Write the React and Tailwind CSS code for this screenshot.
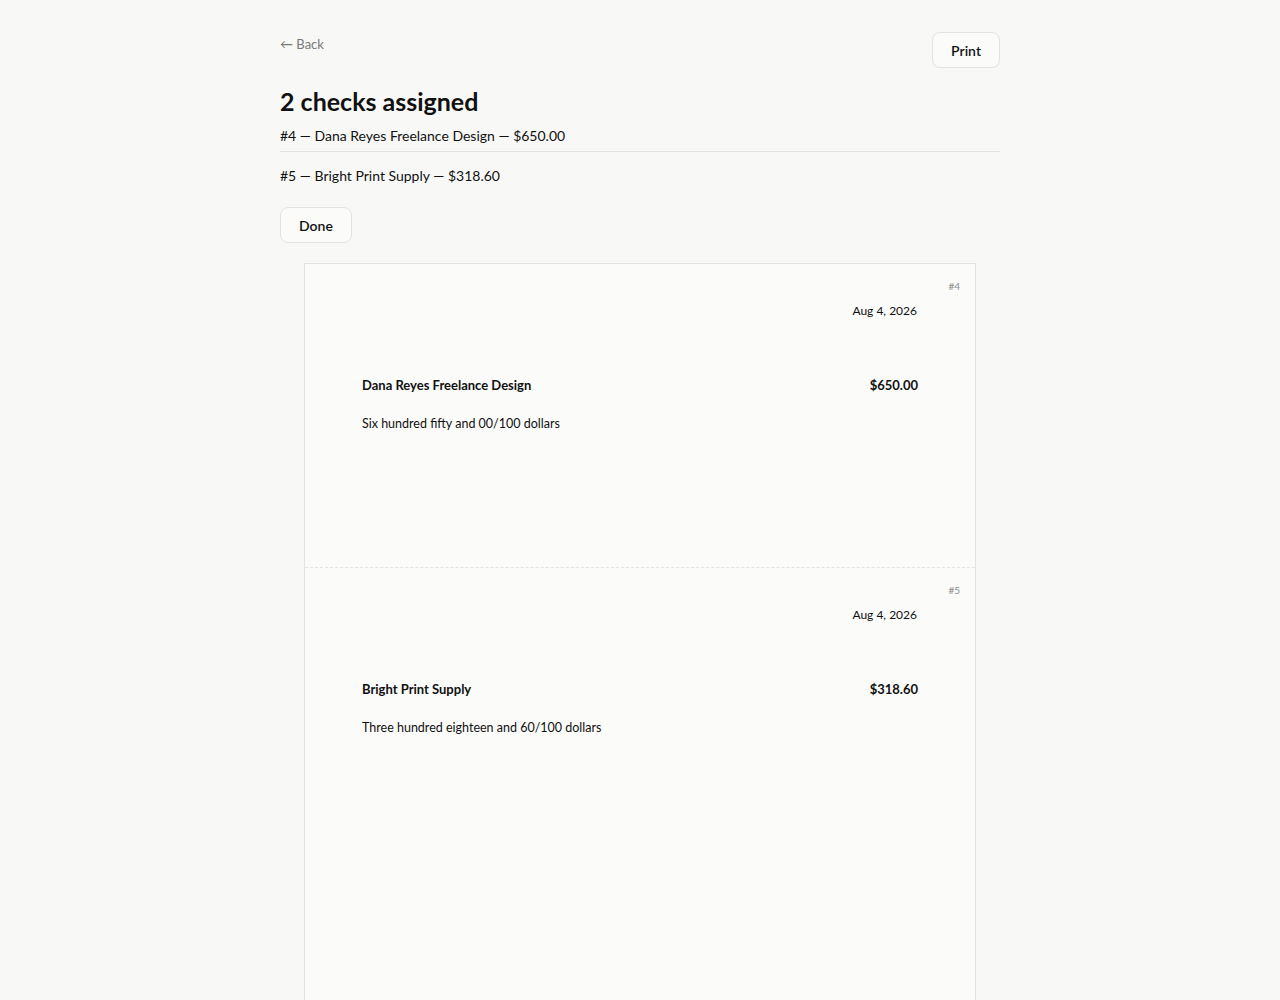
const checks = [
  { num: 4, payee: 'Dana Reyes Freelance Design', amount: '$650.00', words: 'Six hundred fifty and 00/100 dollars', date: 'Aug 4, 2026' },
  { num: 5, payee: 'Bright Print Supply', amount: '$318.60', words: 'Three hundred eighteen and 60/100 dollars', date: 'Aug 4, 2026' },
]

function Check({ c, last }) {
  return (
    <div className={`relative h-[304px] px-[57px] ${last ? '' : 'border-b border-dashed border-[#e2e2df]'}`}>
      <div className="absolute right-[15px] top-[15px] text-[10px] text-[#8a8a86]">#{c.num}</div>
      <div className="pt-[38px] pr-px text-right text-[12px] text-[#111]">{c.date}</div>
      <div className="mt-[56px] flex items-center justify-between text-[13px] font-bold text-[#111]">
        <span>{c.payee}</span>
        <span>{c.amount}</span>
      </div>
      <div className="mt-[19px] text-[12.5px] text-[#111]">{c.words}</div>
    </div>
  )
}

export default function App() {
  return (
    <div className="h-screen overflow-hidden bg-[#f8f8f7] font-['Segoe_UI','Lato','Noto_Sans',sans-serif] text-[#111]">
      <div className="mx-auto w-[720px] pt-[32px]">
        <div className="flex items-start justify-between">
          <button className="mt-[3px] text-[13px] text-[#7a7a76]">← Back</button>
          <button className="h-[36px] rounded-lg border border-[#e3e3e0] bg-[#fbfbfa] px-[18px] text-[14px] font-semibold">Print</button>
        </div>
        <h1 className="mt-[17px] text-[25px] font-bold leading-[32px]">2 checks assigned</h1>
        <div className="mt-[7px] border-b border-[#e3e3e0] pb-[3px] text-[14px] leading-[24px]">#4 — Dana Reyes Freelance Design — $650.00</div>
        <div className="pt-[12px] text-[14px] leading-[24px]">#5 — Bright Print Supply — $318.60</div>
        <button className="mt-[19px] h-[36px] rounded-lg border border-[#e3e3e0] bg-[#fbfbfa] px-[18px] text-[14px] font-semibold">Done</button>
        <div className="mx-[24px] mt-[20px] min-h-[800px] border border-[#e3e3e0] bg-[#fbfbfa]">
          {checks.map((c, i) => <Check key={c.num} c={c} last={i === checks.length - 1} />)}
        </div>
      </div>
    </div>
  )
}
